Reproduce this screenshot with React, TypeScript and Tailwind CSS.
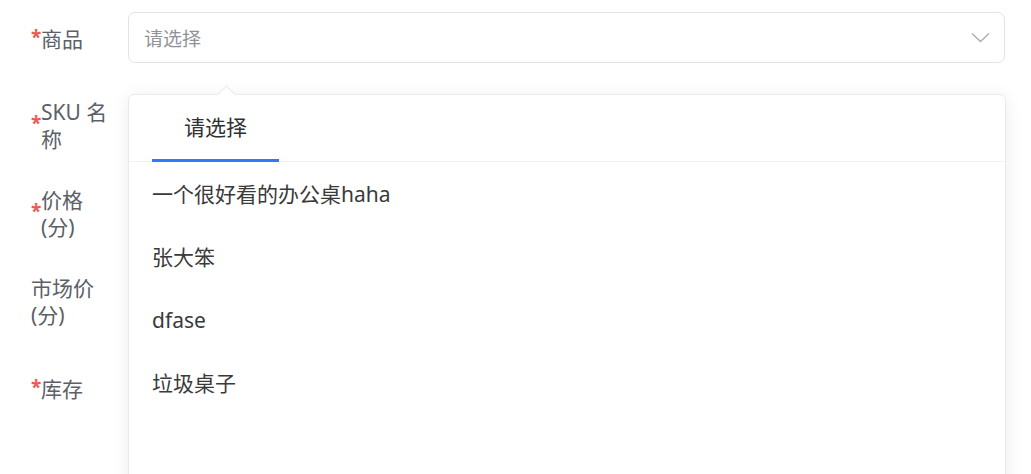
import React from "react";

const font = { fontFamily: '"Noto Sans", "Noto Sans CJK SC", sans-serif' };

function Label({ required, children, className = "" }: { required?: boolean; children: React.ReactNode; className?: string }) {
  return (
    <div className={"flex items-center w-[80px] shrink-0 " + className}>
      {required && <span className="text-[#ee5a52] text-[19px] font-bold leading-none -translate-y-[2px] w-[10px] shrink-0">*</span>}
      <div className="text-[21px] leading-[27px] text-[#5c6068]">{children}</div>
    </div>
  );
}

export default function App() {
  const items = ["一个很好看的办公桌haha", "张大笨", "dfase", "垃圾桌子"];
  return (
    <div className="relative w-[1031px] h-[474px] overflow-hidden bg-white" style={font}>
      <div className="pt-[12px] pl-[31px] pr-[26px] flex flex-col gap-[37px]">
        <div className="flex items-center h-[51px]">
          <Label required className="mt-[3px]">商品</Label>
          <div className="ml-[17px] flex-1 h-[51px] border border-[#e0e3e9] rounded-[7px] flex items-center justify-between pl-[15px] pr-[14px]">
            <span className="text-[19px] text-[#8f9399] pt-[3px]">请选择</span>
            <svg width="19" height="11" viewBox="0 0 19 11" fill="none">
              <path d="M1 1.5 L9.5 9.5 L18 1.5" stroke="#a9acb2" strokeWidth="1.3" />
            </svg>
          </div>
        </div>
        <div className="flex items-center h-[51px]">
          <Label required>SKU 名称</Label>
        </div>
        <div className="flex items-center h-[51px]">
          <Label required>价格(分)</Label>
        </div>
        <div className="flex items-center h-[51px]">
          <Label>市场价(分)</Label>
        </div>
        <div className="flex items-center h-[51px]">
          <Label required>库存</Label>
        </div>
      </div>

      <div className="absolute left-[128px] top-[94px] w-[878px] h-[420px] bg-white border border-[#e8eaf0] rounded-[6px] shadow-[0_3px_18px_rgba(0,0,0,0.08)]">
        <div className="absolute -top-[7px] left-[91px] w-[13px] h-[13px] rotate-45 bg-white border-l border-t border-[#e8eaf0]" />
        <div className="relative h-[67px] border-b border-[#f0f1f4] px-[23px] flex">
          <div className="relative h-full px-[32px] flex items-center text-[21px] text-[#303133]">
            请选择
            <div className="absolute left-0 right-0 bottom-[-1px] h-[3px] bg-[#2a7cf7]" />
          </div>
        </div>
        <div className="pl-[23px] pt-[1px] flex flex-col">
          {items.map((t) => (
            <div key={t} className="h-[63px] flex items-center text-[21px] text-[#3a3a3a]">
              {t}
            </div>
          ))}
        </div>
      </div>
    </div>
  );
}
